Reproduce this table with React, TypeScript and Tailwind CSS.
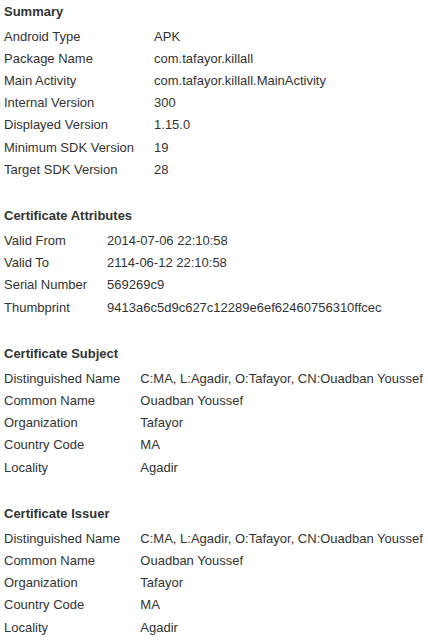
const sections: { title: string; rows: [string, string][] }[] = [
  {
    title: "Summary",
    rows: [
      ["Android Type", "APK"],
      ["Package Name", "com.tafayor.killall"],
      ["Main Activity", "com.tafayor.killall.MainActivity"],
      ["Internal Version", "300"],
      ["Displayed Version", "1.15.0"],
      ["Minimum SDK Version", "19"],
      ["Target SDK Version", "28"],
    ],
  },
  {
    title: "Certificate Attributes",
    rows: [
      ["Valid From", "2014-07-06 22:10:58"],
      ["Valid To", "2114-06-12 22:10:58"],
      ["Serial Number", "569269c9"],
      ["Thumbprint", "9413a6c5d9c627c12289e6ef62460756310ffcec"],
    ],
  },
  {
    title: "Certificate Subject",
    rows: [
      ["Distinguished Name", "C:MA, L:Agadir, O:Tafayor, CN:Ouadban Youssef"],
      ["Common Name", "Ouadban Youssef"],
      ["Organization", "Tafayor"],
      ["Country Code", "MA"],
      ["Locality", "Agadir"],
    ],
  },
  {
    title: "Certificate Issuer",
    rows: [
      ["Distinguished Name", "C:MA, L:Agadir, O:Tafayor, CN:Ouadban Youssef"],
      ["Common Name", "Ouadban Youssef"],
      ["Organization", "Tafayor"],
      ["Country Code", "MA"],
      ["Locality", "Agadir"],
    ],
  },
];

export default function App() {
  return (
    <div className="min-h-screen bg-white pt-[1.5px] font-['Liberation_Sans',Arial,sans-serif] text-[13px] text-[#333]">
      {sections.map((section, i) => (
        <div key={section.title} className={i > 0 ? "mt-[25px]" : ""}>
          {/* Section heading */}
          <h2 className="mb-[4px] pl-[4px] text-[13px] font-bold leading-[20px] text-[#333]">
            {section.title}
          </h2>
          <table className="border-collapse">
            <tbody>
              {section.rows.map(([label, value]) => (
                <tr key={label} className="h-[22.2px] leading-[22.2px]">
                  <td className="whitespace-nowrap pl-[4px] pr-[20px] align-middle">{label}</td>
                  <td className="whitespace-nowrap align-middle">{value}</td>
                </tr>
              ))}
            </tbody>
          </table>
        </div>
      ))}
    </div>
  );
}
